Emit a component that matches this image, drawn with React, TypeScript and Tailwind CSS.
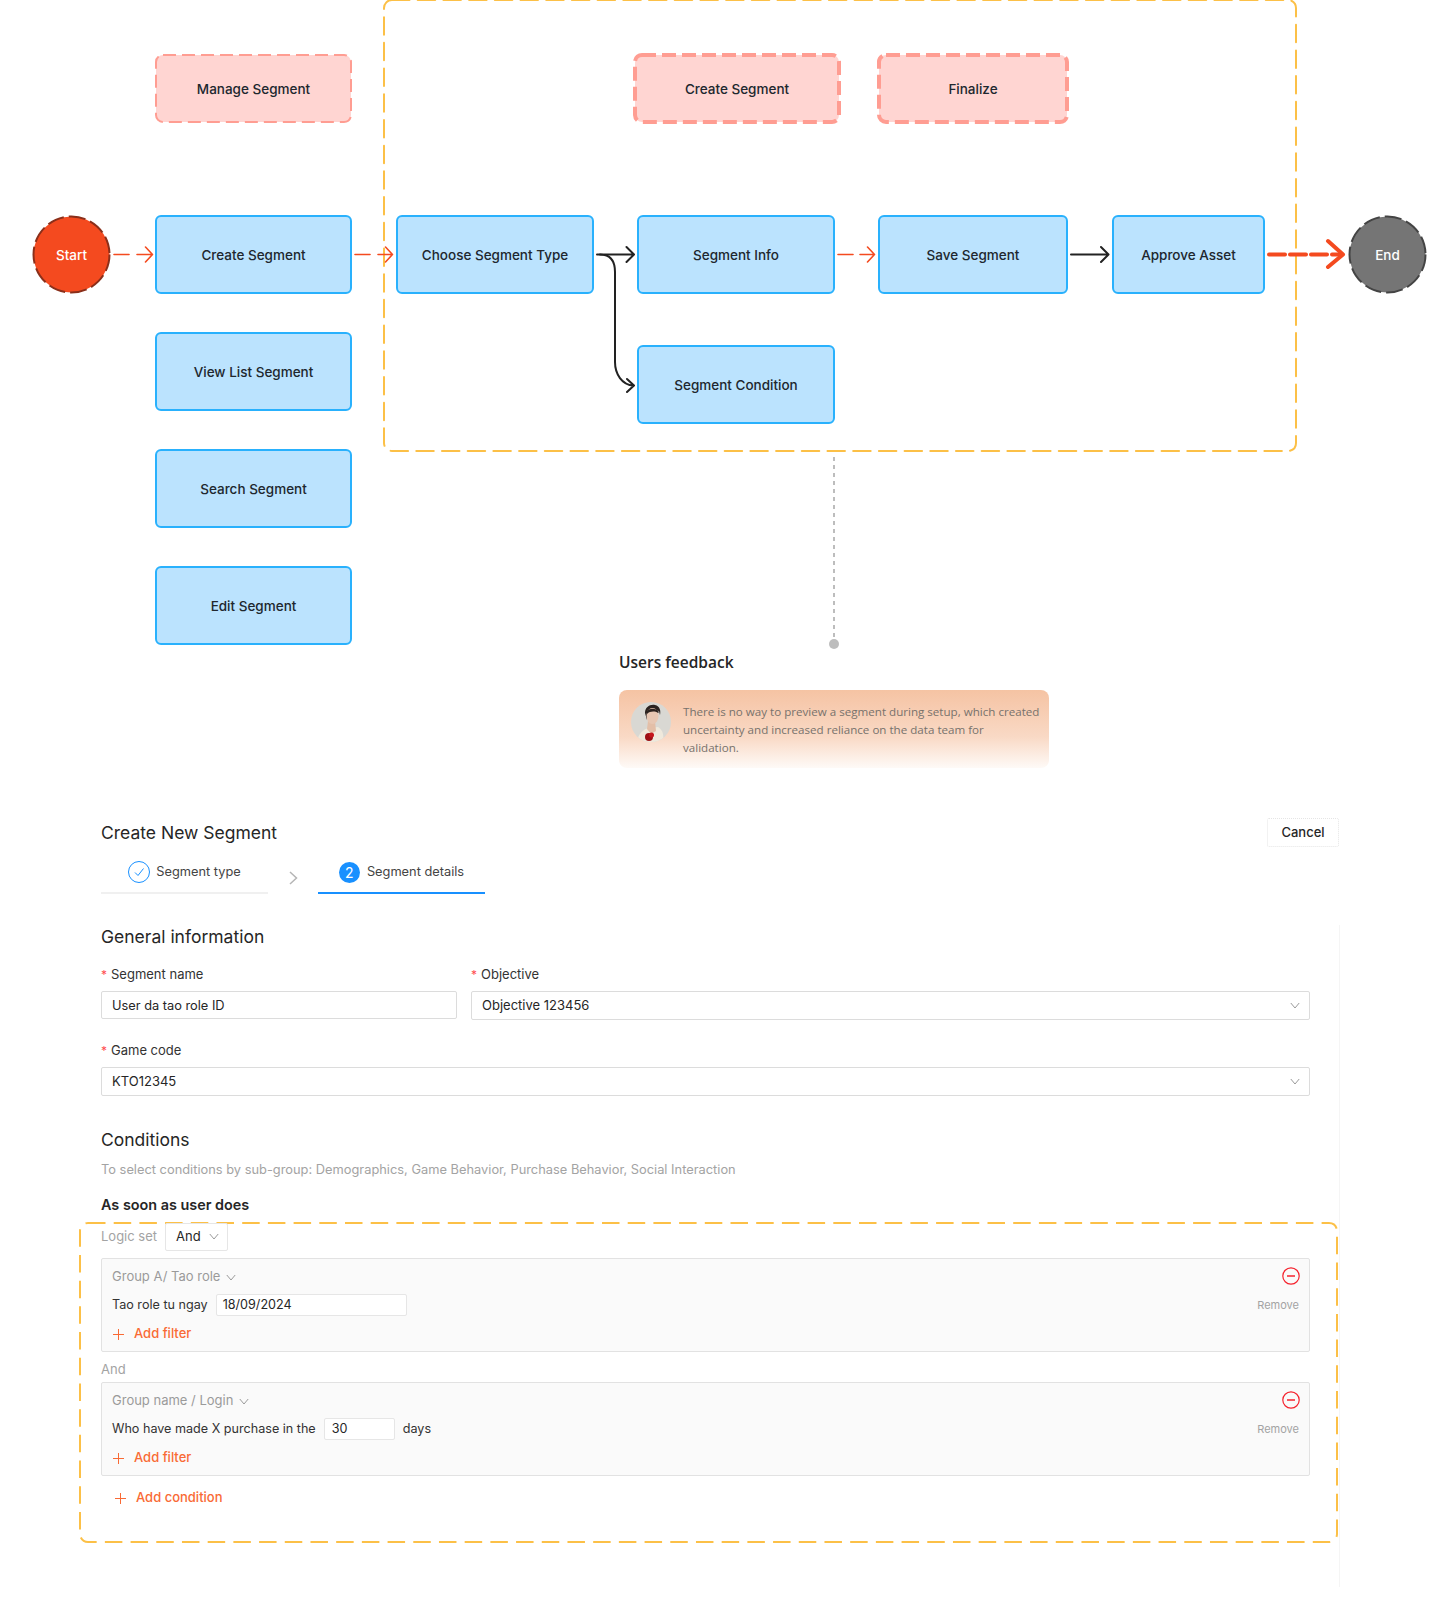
function Node({ x, y, w, label }: { x: string; y: string; w: string; label: string }) {
    return (
        <div className={`absolute ${x} ${y} ${w} flex h-[79px] items-center justify-center rounded-[6px] border-2 border-[#29b1fd] bg-[#bbe3fe] pt-[1px] font-['Inter',sans-serif] text-[13.5px] font-medium text-[#20272e]`}>
            {label}
        </div>
    )
}

function PinkNode({ className, label, width, height, stroke, dash }: { className: string; label: string; width: number; height: number; stroke: number; dash: string }) {
    return (
        <div className={`absolute flex items-center justify-center pt-[2px] font-['Inter',sans-serif] text-[13.5px] font-medium text-[#20272e] ${className}`}>
            <svg className="absolute inset-0" width={width} height={height}>
                <rect x={stroke / 2} y={stroke / 2} width={width - stroke} height={height - stroke} rx="7" fill="#ffd5d2" stroke="#ff9d92" strokeWidth={stroke} strokeDasharray={dash} />
            </svg>
            <span className="relative">{label}</span>
        </div>
    )
}

function Terminal({ className, label, fill, stroke }: { className: string; label: string; fill: string; stroke: string }) {
    return (
        <div className={`absolute flex h-[79px] w-[79px] items-center justify-center pt-[1px] font-['Inter',sans-serif] text-[13.5px] font-medium text-white ${className}`}>
            <svg className="absolute inset-0" width="79" height="79">
                <circle cx="39.5" cy="39.5" r="38" fill={fill} stroke={stroke} strokeWidth="2" strokeDasharray="17 5" />
            </svg>
            <span className="relative">{label}</span>
        </div>
    )
}

function Arrows() {
    const red = "#f44a1f"
    const black = "#222222"
    return (
        <svg className="absolute inset-0" width="1440" height="800" fill="none" strokeLinecap="round" strokeLinejoin="round">
            {/* big dashed group */}
            <rect x="384" y="0" width="912" height="451" rx="8" stroke="#fcc047" strokeWidth="2" strokeDasharray="17.5 8.2" />
            {/* red hand-offs */}
            <g stroke={red} strokeWidth="1.6">
                <path d="M114 254.5H129" />
                <path d="M137 254.5H152M145.500 247L152.500 254.500L145.500 262" />
                <path d="M355 254.500H370" />
                <path d="M378 254.500H392.500M385.500 247L392.500 254.500L385.500 262" />
                <path d="M838 254.500H853" />
                <path d="M860 254.500H874.500M867.500 247L874.500 254.500L867.500 262" />
            </g>
            <g stroke={black} strokeWidth="2">
                <path d="M597 254.500H633.500M626.500 247L634 254.500L626.500 262" />
                <path d="M600 254.500C610 254.500 615 261 615 272V362C615 374 622 385 633.500 385.500M627 379L634 385.500L627 392" />
                <path d="M1071 254.500H1108M1101 247L1108.500 254.500L1101 262" />
            </g>
            <path d="M1269 254.500H1340" stroke={red} strokeWidth="4" strokeDasharray="16 5" />
            <path d="M1328 241L1343 254.500L1328 267" stroke={red} strokeWidth="4" />
            {/* dotted connector to feedback */}
            <path d="M834 457V638" stroke="#bdbdbd" strokeWidth="2" strokeDasharray="4 4" strokeLinecap="butt" />
            <circle cx="834" cy="644" r="5" fill="#bdbdbd" />
        </svg>
    )
}

function Avatar() {
    return (
        <svg className="mt-[12px] ml-[12px] shrink-0" width="40" height="40" viewBox="0 0 40 40">
            <defs>
                <clipPath id="avatar-clip">
                    <circle cx="20" cy="20" r="20" />
                </clipPath>
            </defs>
            <g clipPath="url(#avatar-clip)">
                <rect width="40" height="40" fill="#d9d8d3" />
                <path d="M6 40C7 31 13 27 18 26L27 25C32 28 33 33 32 40Z" fill="#efe9dc" />
                <path d="M17 19H24L25 29L20 32L16 27Z" fill="#e3bfa8" />
                <path d="M14 11C14 5 19 2 24 3C29 4 30 9 29 13L28 9C25 8 19 8 17 11L16 18Z" fill="#2b2320" />
                <ellipse cx="21.500" cy="14" rx="6" ry="8" fill="#e7c7b3" />
                <path d="M16 9C19 6 25 6 28 10L27 11C24 9 19 9 16 12Z" fill="#2b2320" />
                <circle cx="18" cy="35" r="4" fill="#9d1016" />
                <circle cx="20.500" cy="33" r="2.500" fill="#c4161c" />
            </g>
        </svg>
    )
}

function FeedbackCard() {
    return (
        <div className="absolute left-[619px] top-[651px] w-[430px]">
            <div className="h-[22px] font-['Open_Sans',sans-serif] text-[15.5px] leading-[22px] font-semibold text-[#262626]">Users feedback</div>
            <div className="mt-[17px] flex h-[78px] rounded-[8px] bg-linear-to-b from-[#f5c3a3] via-[#f9d9c5] via-60% to-[#fefaf7]">
                <Avatar />
                <p className="ml-[12px] w-[364px] pt-[13px] font-['Open_Sans',sans-serif] text-[11.6px] leading-[18px] text-[#77726c]">
                    There is no way to preview a segment during setup, which created
                    <br />
                    uncertainty and increased reliance on the data team for
                    <br />
                    validation.
                </p>
            </div>
        </div>
    )
}

function Chevron({ className }: { className?: string }) {
    return (
        <svg className={className} width="10" height="7" viewBox="0 0 10 7" fill="none" stroke="#9a9a9a" strokeWidth="1">
            <path d="M.8 1L5 6L9.200 1" />
        </svg>
    )
}

function SelectBox({ value, className }: { value: string; className?: string }) {
    return (
        <div className={`flex h-[29px] items-center justify-between rounded-[2px] border border-[#dcdcdc] bg-white pr-[9px] pl-[10px] ${className ?? ""}`}>
            <span className="text-[13px] text-[#262626]">{value}</span>
            <Chevron />
        </div>
    )
}

function Label({ text }: { text: string }) {
    return (
        <div className="flex h-[18px] items-center text-[13px] text-[#333333]">
            <span className="w-[10px] text-[12px] text-[#ff4d4f]">*</span>
            {text}
        </div>
    )
}

function AddLink({ text, className }: { text: string; className?: string }) {
    return (
        <div className={`flex h-[18px] items-center text-[13px] font-medium text-[#f96a35] ${className ?? ""}`}>
            <svg className="mr-[10px]" width="11" height="11" viewBox="0 0 11 11" stroke="#f96a35" strokeWidth="1">
                <path d="M5.500 0V11M0 5.500H11" />
            </svg>
            {text}
        </div>
    )
}

function ConditionGroup({ group, children }: { group: string; children: React.ReactNode }) {
    return (
        <div className="flex h-[94px] justify-between rounded-[2px] border border-[#e2e2e2] bg-[#fafafa] pr-[10px] pl-[10px]">
            <div>
                <div className="mt-[9px] flex h-[18px] items-center gap-[6px] text-[13px] text-[#9a9a9a]">
                    {group}
                    <Chevron />
                </div>
                <div className="mt-[8px] flex h-[22px] items-center text-[12.6px] text-[#333333]">{children}</div>
                <AddLink text="Add filter" className="mt-[9px] pl-[1px]" />
            </div>
            <div className="flex flex-col items-end">
                <svg className="mt-[8px] mr-[-1px]" width="18" height="18" viewBox="0 0 18 18" fill="none" stroke="#f5222d" strokeWidth="1.200">
                    <circle cx="9" cy="9" r="8.200" />
                    <path d="M5 9H13" strokeWidth="1.500" />
                </svg>
                <div className="mt-[11px] text-[11px] leading-[18px] text-[#a3a3a3]">Remove</div>
            </div>
        </div>
    )
}

function SegmentForm() {
    return (
        <div className="ml-[101px] w-[1239px] font-['Inter',sans-serif]">
            <div className="flex h-[47px] items-start justify-between pt-[18px]">
                <h1 className="text-[17.5px] leading-[29px] font-normal text-[#262626]">Create New Segment</h1>
                <button className="mr-[1px] h-[29px] w-[72px] rounded-[2px] border border-dotted border-[#e5e5e5] pt-[1px] text-[13px] font-medium text-[#262626]">Cancel</button>
            </div>
            <div className="mt-[4px] flex">
                <div className="flex h-[43px] w-[167px] items-center justify-center gap-[6px] border-b-2 border-[#f0f0f0] pt-[1px] text-[12.8px] text-[#444444]">
                    <svg width="22" height="22" viewBox="0 0 22 22" fill="none" stroke="#1890ff">
                        <circle cx="11" cy="11" r="10.500" />
                        <path d="M7 11.500L10 14.500L15.500 7.500" />
                    </svg>
                    Segment type
                </div>
                <div className="flex w-[50px] justify-center pt-[20px]">
                    <svg width="9" height="14" viewBox="0 0 9 14" fill="none" stroke="#b5b5b5" strokeWidth="1.500">
                        <path d="M1 1L7.500 7L1 13" />
                    </svg>
                </div>
                <div className="flex h-[43px] w-[167px] items-center justify-center gap-[7px] border-b-2 border-[#1890ff] pt-[1px] text-[12.8px] text-[#444444]">
                    <span className="flex h-[21px] w-[21px] items-center justify-center rounded-full bg-[#1890ff] text-[14px] text-white">2</span>
                    Segment details
                </div>
            </div>
            <div className="h-[31px]" />
            <div className="h-[662px] border-r border-[#f5f5f5] pr-[29px]">
                <h2 className="text-[17.5px] leading-[24px] font-normal text-[#262626]">General information</h2>
                <div className="mt-[17px] flex gap-[14px]">
                    <div className="w-[356px]">
                        <Label text="Segment name" />
                        <div className="mt-[7px] flex h-[28px] items-center rounded-[2px] border border-[#dcdcdc] bg-white pt-[1px] pl-[10px] text-[12.8px] text-[#262626]">User da tao role ID</div>
                    </div>
                    <div className="flex-1">
                        <Label text="Objective" />
                        <SelectBox value="Objective 123456" className="mt-[7px] h-[28px]" />
                    </div>
                </div>
                <div className="mt-[22px]">
                    <Label text="Game code" />
                    <SelectBox value="KTO12345" className="mt-[7px]" />
                </div>
                <h2 className="mt-[32px] text-[17.5px] leading-[24px] font-normal text-[#262626]">Conditions</h2>
                <p className="mt-[9px] text-[12.85px] leading-[18px] text-[#a3a3a3]">To select conditions by sub-group: Demographics, Game Behavior, Purchase Behavior, Social Interaction</p>
                <h3 className="mt-[16px] text-[14.4px] leading-[20px] font-semibold text-[#262626]">As soon as user does</h3>
                <div className="relative mt-[8px]">
                    <svg className="absolute top-[-1px] left-[-22px]" width="1260" height="321" fill="none">
                        <rect x="1" y="1" width="1257" height="319" rx="8" stroke="#fcc047" strokeWidth="2" strokeDasharray="17.500 8.200" />
                    </svg>
                    <div className="relative flex h-[27px] items-center gap-[8px] text-[13px] text-[#a3a3a3]">
                        Logic set
                        <div className="flex h-[28px] w-[63px] items-center justify-between rounded-[2px] border border-[#e6e6e6] bg-white pr-[8px] pl-[10px] text-[#262626]">
                            And
                            <Chevron />
                        </div>
                    </div>
                    <div className="relative mt-[8px]">
                        <ConditionGroup group="Group A/ Tao role">
                            Tao role tu ngay
                            <div className="ml-[8px] flex h-[22px] w-[191px] items-center rounded-[2px] border border-[#e6e6e6] bg-white pl-[6px] text-[#262626]">18/09/2024</div>
                        </ConditionGroup>
                        <div className="mt-[8px] h-[18px] text-[13px] leading-[18px] text-[#a3a3a3]">And</div>
                        <div className="mt-[4px]">
                            <ConditionGroup group="Group name / Login">
                                Who have made X purchase in the
                                <div className="mx-[8px] flex h-[22px] w-[71px] items-center rounded-[2px] border border-[#e6e6e6] bg-white pl-[7px] text-[#262626]">30</div>
                                days
                            </ConditionGroup>
                        </div>
                        <AddLink text="Add condition" className="mt-[13px] pl-[14px]" />
                    </div>
                </div>
            </div>
        </div>
    )
}

export default function App() {
    return (
        <div className="h-[1608px] w-[1440px] overflow-hidden bg-white">
            <div className="relative h-[800px]">
                <Arrows />
                <Terminal className="left-[32px] top-[215px]" label="Start" fill="#f44a1f" stroke="#8a2f1a" />
                <Terminal className="left-[1348px] top-[215px]" label="End" fill="#757575" stroke="#444444" />
                <PinkNode className="left-[155px] top-[54px] h-[69px] w-[197px]" label="Manage Segment" width={197} height={69} stroke={2} dash="13 6" />
                <PinkNode className="left-[633px] top-[53px] h-[71px] w-[208px]" label="Create Segment" width={208} height={71} stroke={4} dash="14 6" />
                <PinkNode className="left-[877px] top-[53px] h-[71px] w-[192px]" label="Finalize" width={192} height={71} stroke={4} dash="14 6" />
                <Node x="left-[155px]" y="top-[215px]" w="w-[197px]" label="Create Segment" />
                <Node x="left-[155px]" y="top-[332px]" w="w-[197px]" label="View List Segment" />
                <Node x="left-[155px]" y="top-[449px]" w="w-[197px]" label="Search Segment" />
                <Node x="left-[155px]" y="top-[566px]" w="w-[197px]" label="Edit Segment" />
                <Node x="left-[396px]" y="top-[215px]" w="w-[198px]" label="Choose Segment Type" />
                <Node x="left-[637px]" y="top-[215px]" w="w-[198px]" label="Segment Info" />
                <Node x="left-[637px]" y="top-[345px]" w="w-[198px]" label="Segment Condition" />
                <Node x="left-[878px]" y="top-[215px]" w="w-[190px]" label="Save Segment" />
                <Node x="left-[1112px]" y="top-[215px]" w="w-[153px]" label="Approve Asset" />
                <FeedbackCard />
            </div>
            <SegmentForm />
        </div>
    )
}
